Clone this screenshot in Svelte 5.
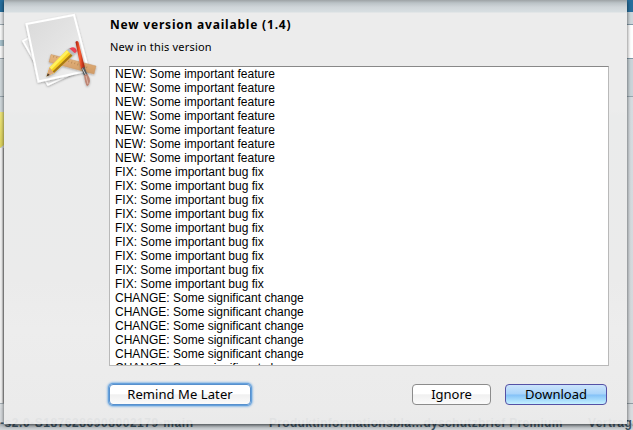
<script>
  const notes = [
    ...Array(7).fill('NEW: Some important feature'),
    ...Array(9).fill('FIX: Some important bug fix'),
    ...Array(6).fill('CHANGE: Some significant change')
  ];
</script>

<div class="desktop">
  <div class="edge left"><i class="blue"></i><i class="white"></i><i class="paper"></i><i class="yellow"></i><i class="lines"></i><i class="foot"></i></div>
  <div class="edge right"><i class="blue"></i><i class="tool"></i><i class="blank"></i><i class="panel"></i><i class="rest"></i></div>
  <div class="behind"><span class="file">-s2.0-S1876286908002179-main</span><span class="product">Produktinformationsbla…dyschutzbrief Premium</span><span class="contract">Vertragsi</span></div>

  <section class="sheet">
    <div class="icon">
      <svg width="84" height="84" viewBox="16 10 84 84">
        <defs>
          <linearGradient id="page" x1="0" y1="0" x2="1" y2="1"><stop stop-color="#d9d9d9" /><stop offset=".5" stop-color="#e4e4e4" /><stop offset="1" stop-color="#f3f3f3" /></linearGradient>
          <linearGradient id="wood" x1="0" y1="0" x2="0" y2="1"><stop stop-color="#e7b77e" /><stop offset="1" stop-color="#d09a66" /></linearGradient>
          <linearGradient id="red" x1="0" x2="1"><stop stop-color="#a51c0b" /><stop offset=".45" stop-color="#ff6034" /><stop offset="1" stop-color="#901309" /></linearGradient>
          <filter id="shade" x="-20%" y="-20%" width="140%" height="150%"><feDropShadow dx="0" dy="1" stdDeviation=".8" flood-opacity=".3" /></filter>
        </defs>
        <path d="M23 41 68 17 86 67 48 85Z" fill="#e8e8e8" stroke="#fff" stroke-width="1.7" filter="url(#shade)" />
        <path d="M26.5 24 74 15 88.5 70.5 38.5 81.5Z" fill="url(#page)" stroke="#fff" stroke-width="2" filter="url(#shade)" />
        <g filter="url(#shade)">
          <path d="M51 54.5 96 66 94 74 49 62Z" fill="url(#wood)" stroke="#c99767" stroke-width=".5" />
          <path d="m54 55.5-.6 2m3.6-1-.5 1.6m3.5-.6-.6 2m3.6-1-.5 1.6m3.5-.6-.6 2m3.6-1-.5 1.6m3.5-.6-.6 2m3.6-1-.5 1.6m3.5-.6-.6 2m3.6-1-.5 1.6m3.5-.6-.6 2m3.6-1-.5 1.6" stroke="#9c6e40" stroke-width=".5" />
          <path d="M46.5 76.5 49.5 67.5 67 50 72.5 55.5 54 73Z" fill="#f5ce20" />
          <path d="M49.5 67.5 67 50 69 52 51.5 69.5Z" fill="#fff15c" />
          <path d="M52.5 71.5 71 53.7 72.5 55.5 54 73Z" fill="#a87914" />
          <path d="M46.5 76.5 49.5 67.5 54 73Z" fill="#dda779" />
          <path d="M46.5 76.5 47.8 73.2 49.8 75Z" fill="#443326" />
          <path d="M67 50 69.5 47.8 75 53 72.5 55.5Z" fill="#b8babd" />
          <path d="M69.5 48.5Q74 46 76 49T74.5 53Z" fill="#ee4254" />
        </g>
        <g filter="url(#shade)">
          <path d="M75.5 42Q77 40 78.5 42L85 68 81 69Z" fill="url(#red)" />
          <path d="M81.5 68 84.5 67 87.5 75 84 76Z" fill="#54585b" />
          <path d="M82.5 68.5 86 75.5" stroke="#ddd" stroke-width=".8" />
          <path d="M84 75 87.5 74Q90 78 90 81 89 86 87 86 85 84 84 75Z" fill="#bc8473" />
          <path d="M86 76Q87 80 88 84" stroke="#e0b3a2" stroke-width="1" fill="none" />
        </g>
      </svg>
    </div>
    <main>
      <h1>New version available (1.4)</h1>
      <p>New in this version</p>
      <div class="notes">
        {#each notes as note}<div>{note}</div>{/each}
      </div>
      <footer>
        <button class="remind"><span>Remind Me Later</span></button>
        <button class="ignore"><span>Ignore</span></button>
        <button class="download"><span>Download</span></button>
      </footer>
    </main>
  </section>
</div>

<style>
  * { box-sizing: border-box; }
  .desktop { width: 633px; height: 430px; position: relative; overflow: hidden; background: #d2d7db; display: flex; justify-content: space-between; }
  .edge { width: 6px; display: flex; flex-direction: column; }
  .left { width: 4px; }
  .edge i { display: block; }
  .blue { height: 12px; background: #276f9e; }
  .white { height: 48px; background: linear-gradient(#e5e9ec 12px, #9ba9b1 12px 13px, #fafbfb 13px 28px, #a9c3ce 28px 34px, #fafafa 34px 46px, #99a3aa 46px 47px, #d5dce0 47px); }
  .paper { height: 52px; background: linear-gradient(#d1d9dd 36px, #98a5ae 36px 37px, #d1d9dd 37px); }
  .yellow { height: 36px; background: linear-gradient(#f0e87b, #ded35c); clip-path: polygon(0 0, 100% 0, 100% 92%, 0 100%); }
  .lines { height: 255px; background: linear-gradient(90deg, #f4f4f4 2px, #d8d8d8 2px 3px, #a2a2a2 3px); }
  .foot { height: 27px; background: linear-gradient(#a4aeb4 1px, #dce0e3 1px 20px, #718b9a 20px 21px, #cbd0d4 21px); }
  .tool { height: 13px; background: linear-gradient(#ced7dc 12px, #8299a7 12px); }
  .blank { height: 34px; background: linear-gradient(#fff 33px, #8299a7 33px); }
  .panel { height: 38px; background: linear-gradient(#cbd5da 37px, #98a7b0 37px); }
  .rest { flex: 1; background: linear-gradient(#d6dde1, #d5d9dc 306px, #929da4 306px 307px, #d8dcdf 307px); }
  .behind { position: absolute; left: 0; right: 0; bottom: 0; height: 22px; padding-top: 8px; display: flex; background: linear-gradient(#d9dde0 15px, #a4adb3 16px, #c3c8cc 19px, #d1d5d8); font: bold 12px/14px "Liberation Sans", sans-serif; color: #3c5261; white-space: nowrap; }
  .file { width: 269px; flex: none; letter-spacing: .55px; }
  .product { width: 319px; flex: none; letter-spacing: .31px; }
  .contract { letter-spacing: .4px; flex: none; }
  .sheet { position: absolute; left: 4px; top: 0; width: 623px; height: 424px; display: flex; background: linear-gradient(#9da2a5 0, #bbc3c7 3px, #cfd5d9 7px, #d8dfe2 12px, #ececec 13px, #ececec 110px, #eaebeb 115px, #ebebeb 280px, #ededed 330px, #ebebeb 410px, rgba(235,235,235,.94) 418px); box-shadow: 0 1px 4px rgba(0,0,0,.65); }
  .icon { width: 105px; padding: 10px 0 0 12px; }
  .icon svg { display: block; }
  main { width: 500px; display: flex; flex-direction: column; }
  h1 { margin: 0; padding: 16px 0 0 1px; height: 38px; font: bold 12px/17px "Noto Sans", sans-serif; letter-spacing: .8px; color: #000; white-space: nowrap; }
  p { margin: 0; height: 28px; padding: 1px 0 0 1px; font: 11px/15px "Noto Sans", sans-serif; letter-spacing: .2px; color: #000; }
  .notes { height: 300px; overflow: hidden; background: #fff; border: 1px solid #b9b9b9; border-top-color: #888; padding-left: 5px; font: 12px/14px "Liberation Sans", sans-serif; color: #000; }
  footer { display: flex; padding-top: 18px; height: 58px; }
  button { display: flex; justify-content: center; align-items: center; height: 21px; padding: 0; border: 1px solid #8c8c8c; border-radius: 4px; background: linear-gradient(#fff 0 45%, #f0f0f0 52%, #fbfbfb); font: 13px/17px "Noto Sans", sans-serif; color: #000; white-space: nowrap; }
  button span { display: block; }
  .remind { width: 142px; border-color: #5790cd; box-shadow: 0 0 0 1px #66a1dc, 0 0 2px 2px #94bee6; }
  .remind span { letter-spacing: .08px; }
  .ignore { width: 79px; margin-left: 161px; }
  .download { width: 102px; margin-left: 14px; border-color: #5551a5; background: linear-gradient(#cce4fb, #a9d4fa 48%, #83c1f7 52%, #c5f1ff); }
</style>
